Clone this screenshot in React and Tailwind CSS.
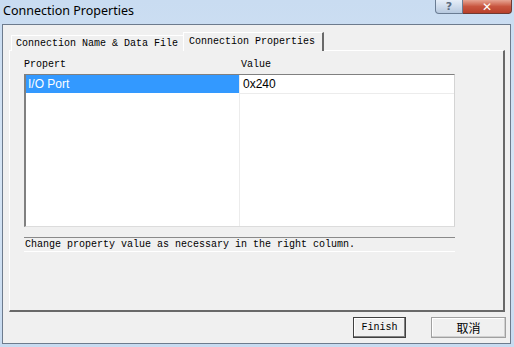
import React from "react";

const mono = { fontFamily: '"Liberation Mono", "DejaVu Sans Mono", monospace' };

export default function App() {
  return (
    <div className="w-[514px] h-[347px] flex flex-col bg-gradient-to-b from-[#c9dcf1] via-[#d6e5f5] to-[#c8dbf0] overflow-hidden">
      {/* Title bar */}
      <div className="h-[24px] flex items-start shrink-0">
        <div className="pl-[3px] pt-[2px] text-[12.5px] text-black leading-[18px] font-['Noto_Sans',sans-serif]">
          Connection Properties
        </div>
        <div className="ml-auto mr-[2px] flex">
          <div className="w-[28px] h-[14px] flex items-center justify-center rounded-bl-[4px] border border-t-0 border-[#6a7c93] bg-gradient-to-b from-[#e6eef8] to-[#b7c9df] text-[#5b6b80] text-[11px] leading-none font-bold font-['DejaVu_Sans',sans-serif]">
            ?
          </div>
          <div className="w-[49px] h-[14px] flex items-center justify-center rounded-br-[4px] border border-t-0 border-l-0 border-[#6e3a33] bg-gradient-to-b from-[#e6a493] via-[#c8553f] to-[#b8402b] text-white text-[12px] leading-none font-bold font-['DejaVu_Sans',sans-serif]">
            ✕
          </div>
        </div>
      </div>

      {/* Client area */}
      <div className="ml-[2px] w-[509px] h-[320px] border border-[#6d7b8d] bg-[#f0f0f0] flex flex-col" style={mono}>
        {/* Tabs */}
        <div className="pt-[7px] pl-[8px] flex items-end relative z-10 -mb-px">
          <div className="w-[173px] h-[16px] border-t border-l border-white border-r border-r-[#a0a0a0] bg-[#f0f0f0] text-[10px] leading-[15px] pl-[4px] text-black rounded-tl-[1px]">
            Connection Name &amp; Data File
          </div>
          <div className="w-[141px] h-[19px] -ml-px border-t border-l border-white border-r-2 border-r-[#696969] bg-[#f0f0f0] text-[10px] leading-[14px] pl-[5px] pt-[2px] text-black">
            Connection Properties
          </div>
        </div>

        {/* Panel */}
        <div className="ml-[6px] w-[496px] h-[262px] border-t border-l border-white border-r-2 border-b-2 border-r-[#696969] border-b-[#696969] flex flex-col px-[14px]">
          <div className="flex h-[23px] items-end pb-[3px] text-[10px] leading-[12px] text-black">
            <div className="w-[217px]">Propert</div>
            <div>Value</div>
          </div>

          {/* List */}
          <div className="w-[431px] h-[153px] border-t border-l-2 border-t-[#808080] border-l-[#808080] border-r border-b border-r-[#d4d4d4] border-b-[#dcdcdc] bg-white flex">
            <div className="w-[214px] border-r border-[#ececec] flex flex-col">
              <div className="h-[18px] bg-[#3399ff] text-white text-[12px] leading-[18px] pl-[2px] font-['Liberation_Sans',sans-serif]">
                I/O Port
              </div>
            </div>
            <div className="flex-1 flex flex-col">
              <div className="h-[19px] border-b border-[#ececec] text-black text-[12px] leading-[18px] pl-[3px] font-['Liberation_Sans',sans-serif]">
                0x240
              </div>
            </div>
          </div>

          {/* Status */}
          <div className="mt-[10px] w-[431px] h-[15px] border-t border-[#8a8a8a] border-b border-b-white bg-[#f0f0f0] text-[10px] leading-[13px] pl-[1px] text-black">
            Change property value as necessary in the right column.
          </div>
        </div>

        {/* Buttons */}
        <div className="flex justify-end gap-[25px] pr-[4px] pt-[5px]">
          <div className="w-[53px] h-[21px] border border-[#404040] bg-[#f0f0f0] shadow-[inset_-1px_-1px_0_#808080,inset_1px_1px_0_#ffffff] flex items-center justify-center text-[10px] text-black">
            Finish
          </div>
          <div className="w-[75px] h-[21px] border border-[#a0a0a0] bg-[#f0f0f0] shadow-[inset_-1px_-1px_0_#d0d0d0,inset_1px_1px_0_#ffffff] flex items-center justify-center text-[12px] text-black font-['Noto_Sans_CJK_SC',sans-serif]">
            取消
          </div>
        </div>
      </div>
    </div>
  );
}
